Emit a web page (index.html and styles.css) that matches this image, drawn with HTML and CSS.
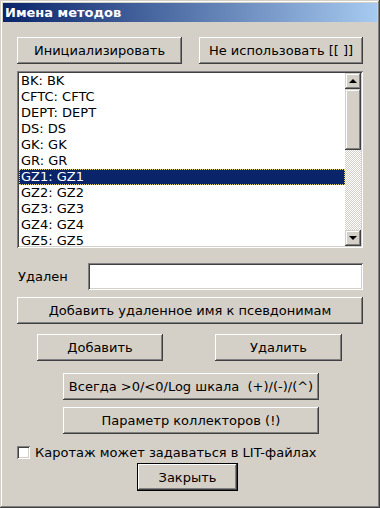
FILE: index.html
```html
<!DOCTYPE html>
<html lang="ru">
<head>
<meta charset="utf-8">
<title>Имена методов</title>
<link rel="stylesheet" href="styles.css">
</head>
<body>
<div class="window">
  <div class="title">Имена методов</div>
  <div class="content">
    <div class="row-top">
      <button class="btn btn-init">Инициализировать</button>
      <button class="btn btn-skip">Не использовать [[ ]]</button>
    </div>
    <div class="listbox">
      <ul class="items">
        <li>BK: BK</li>
        <li>CFTC: CFTC</li>
        <li>DEPT: DEPT</li>
        <li>DS: DS</li>
        <li>GK: GK</li>
        <li>GR: GR</li>
        <li class="sel">GZ1: GZ1</li>
        <li>GZ2: GZ2</li>
        <li>GZ3: GZ3</li>
        <li>GZ4: GZ4</li>
        <li>GZ5: GZ5</li>
      </ul>
      <div class="scrollbar">
        <div class="sb-btn"><span class="arrow-up"></span></div>
        <div class="sb-thumb"></div>
        <div class="sb-track"></div>
        <div class="sb-btn"><span class="arrow-down"></span></div>
      </div>
    </div>
    <div class="row-field">
      <span class="label">Удален</span>
      <div class="field"></div>
    </div>
    <button class="btn btn-wide">Добавить удаленное имя к псевдонимам</button>
    <div class="row-pair">
      <button class="btn btn-add">Добавить</button>
      <button class="btn btn-del">Удалить</button>
    </div>
    <button class="btn btn-mid btn-always">Всегда &gt;0/&lt;0/Log шкала&nbsp; (+)/(-)/(^)</button>
    <button class="btn btn-mid btn-param">Параметр коллекторов (!)</button>
    <label class="check-row"><span class="checkbox"></span>Каротаж может задаваться в LIT-файлах</label>
    <button class="btn btn-default">Закрыть</button>
  </div>
</div>
</body>
</html>
```

FILE: styles.css
```css
html, body {
  margin: 0;
  padding: 0;
  background: #d4d0c8;
}
body {
  font-family: "DejaVu Sans", "Liberation Sans", sans-serif;
  font-size: 13px;
  color: #000;
}
.window {
  width: 380px;
  height: 508px;
  box-sizing: border-box;
  padding: 3px;
  background: #d4d0c8;
  box-shadow: inset -1px -1px #404040, inset 1px 1px #d4d0c8, inset -2px -2px #808080, inset 2px 2px #fff;
  display: flex;
  flex-direction: column;
}
.title {
  height: 19px;
  line-height: 19px;
  padding-left: 2px;
  color: #fff;
  font-weight: bold;
  font-size: 13px;
  background: linear-gradient(to right, #0a246a, #a6caf0);
  white-space: nowrap;
}
.content {
  padding: 15px 14px 0 14px;
  display: flex;
  flex-direction: column;
  align-items: flex-start;
}
.btn {
  font-family: inherit;
  font-size: 13px;
  color: #000;
  background: #d4d0c8;
  border: none;
  margin: 0;
  padding: 0;
  height: 27px;
  box-sizing: border-box;
  box-shadow: inset -1px -1px #404040, inset 1px 1px #fff, inset -2px -2px #808080, inset 2px 2px #d4d0c8;
  white-space: nowrap;
}
.row-top {
  display: flex;
  width: 346px;
  justify-content: space-between;
}
.btn-init { width: 165px; }
.btn-skip { width: 164px; }
.listbox {
  margin-top: 7px;
  width: 346px;
  height: 177px;
  box-sizing: border-box;
  padding: 2px;
  background: #fff;
  box-shadow: inset 1px 1px #808080, inset -1px -1px #fff, inset 2px 2px #404040, inset -2px -2px #d4d0c8;
  display: flex;
  overflow: hidden;
}
.items {
  list-style: none;
  margin: 0;
  padding: 0;
  flex: 1;
  height: 173px;
  overflow: hidden;
}
.items li {
  height: 16px;
  line-height: 16px;
  padding-left: 2px;
  white-space: nowrap;
}
.items li.sel {
  background: #0a246a;
  color: #fff;
  outline: 1px dotted #e8d870;
  outline-offset: -1px;
}
.scrollbar {
  width: 16px;
  display: flex;
  flex-direction: column;
}
.sb-btn {
  height: 16px;
  box-sizing: border-box;
  background: #d4d0c8;
  box-shadow: inset -1px -1px #404040, inset 1px 1px #d4d0c8, inset -2px -2px #808080, inset 2px 2px #fff;
  display: flex;
  align-items: center;
  justify-content: center;
}
.sb-thumb {
  height: 61px;
  background: #d4d0c8;
  box-shadow: inset -1px -1px #404040, inset 1px 1px #d4d0c8, inset -2px -2px #808080, inset 2px 2px #fff;
}
.sb-track {
  flex: 1;
  background: repeating-conic-gradient(#fff 0 25%, #d4d0c8 0 50%) 0 0 / 2px 2px;
}
.arrow-up {
  width: 0;
  height: 0;
  border-left: 4px solid transparent;
  border-right: 4px solid transparent;
  border-bottom: 4px solid #000;
  margin-top: -1px;
}
.arrow-down {
  width: 0;
  height: 0;
  border-left: 4px solid transparent;
  border-right: 4px solid transparent;
  border-top: 4px solid #000;
}
.row-field {
  margin-top: 15px;
  width: 346px;
  display: flex;
  align-items: center;
  justify-content: space-between;
}
.label {
  padding-left: 1px;
}
.field {
  width: 275px;
  height: 27px;
  box-sizing: border-box;
  background: #fff;
  box-shadow: inset 1px 1px #808080, inset -1px -1px #fff, inset 2px 2px #404040, inset -2px -2px #d4d0c8;
}
.btn-wide {
  margin-top: 7px;
  width: 346px;
}
.row-pair {
  margin-top: 10px;
  display: flex;
  padding-left: 20px;
  gap: 52px;
}
.btn-add { width: 126px; }
.btn-del { width: 127px; }
.btn-mid {
  width: 256px;
  margin-left: 46px;
}
.btn-always { margin-top: 12px; }
.btn-param { margin-top: 7px; }
.check-row {
  margin-top: 12px;
  height: 13px;
  display: flex;
  align-items: center;
  gap: 5px;
  white-space: nowrap;
}
.checkbox {
  width: 13px;
  height: 13px;
  box-sizing: border-box;
  background: #fff;
  box-shadow: inset 1px 1px #808080, inset -1px -1px #fff, inset 2px 2px #404040, inset -2px -2px #d4d0c8;
}
.btn-default {
  margin-top: 4px;
  margin-left: 120px;
  width: 101px;
  height: 28px;
  box-shadow: inset 0 0 0 1px #000, inset -2px -2px #404040, inset 2px 2px #fff, inset -3px -3px #808080;
}
```
